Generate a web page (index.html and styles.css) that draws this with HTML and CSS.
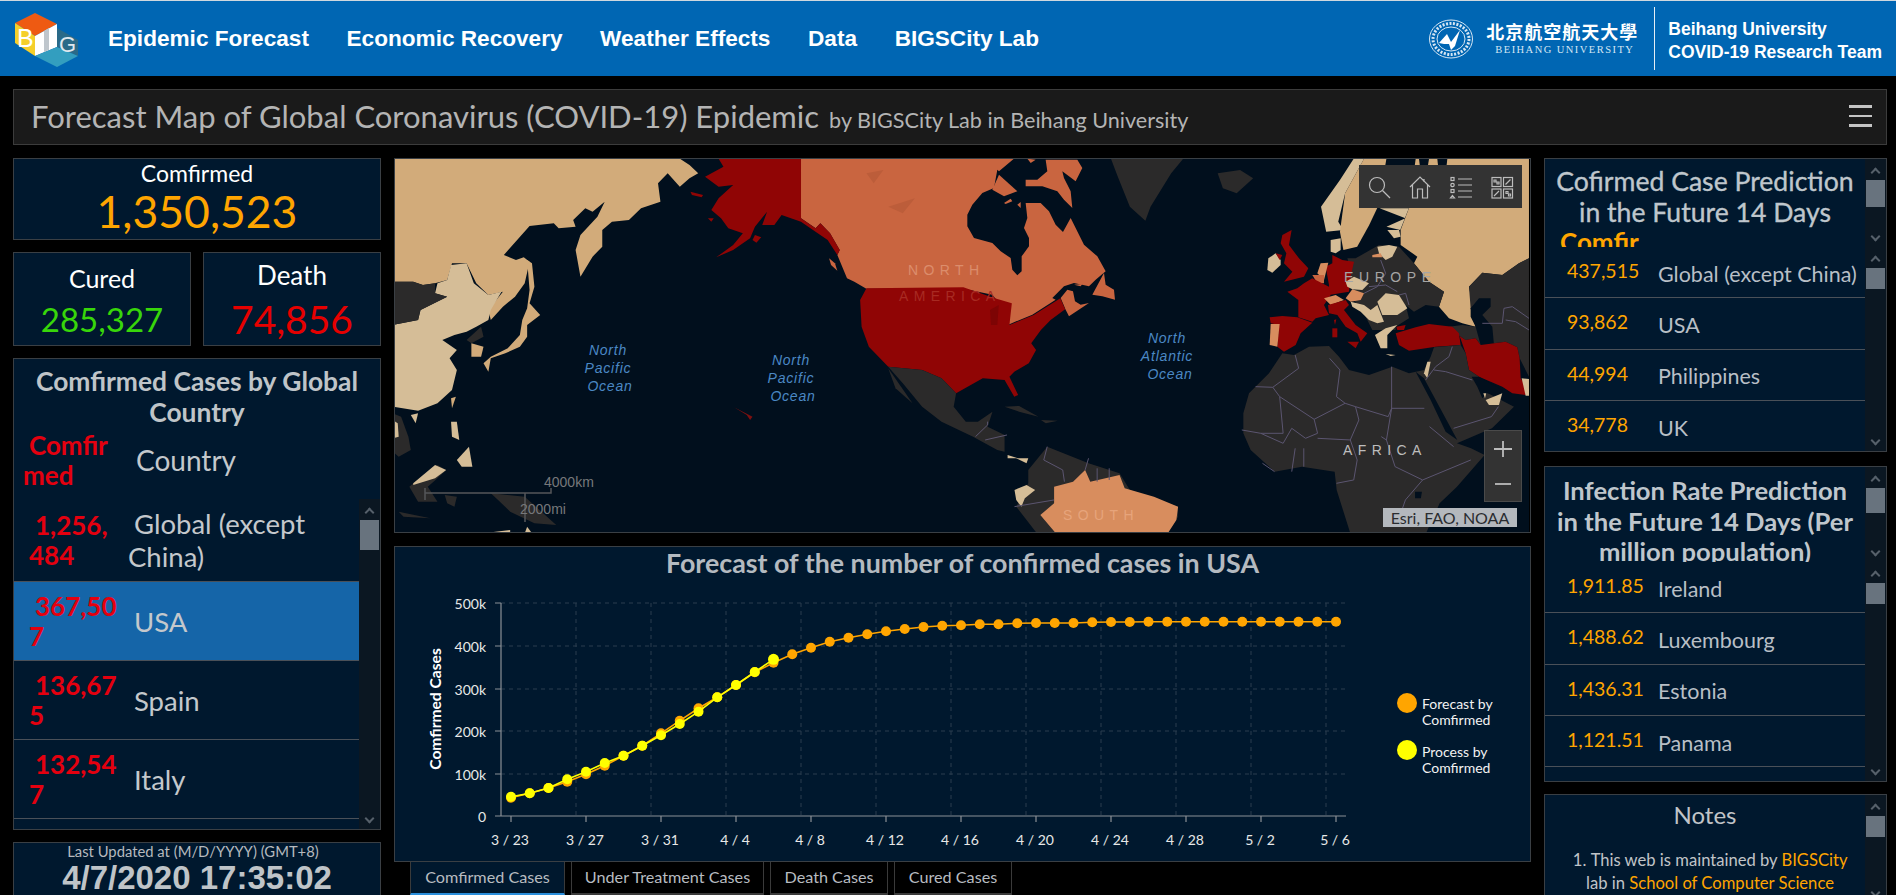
FILE: index.html
```html
<!DOCTYPE html>
<html lang="en">
<head>
<meta charset="utf-8">
<title>Forecast Map of Global Coronavirus (COVID-19) Epidemic</title>
<link rel="stylesheet" href="styles.css">
</head>
<body>
<div class="page">
  <header class="topbar">
    <svg class="logo" width="66" height="56" viewBox="14 12 66 56">
      <polygon fill="#ee5a12" points="35,13 57,24 35,36 15,23"/>
      <polygon fill="#f5cf2a" points="15,23 35,36 35,56 15,43"/>
      <polygon fill="#ffffff" points="35,36 57,24 57,47 35,56"/>
      <polygon fill="#bfc6cc" points="44,31 49,28 49,50 44,52"/>
      <polygon fill="#2a6a88" points="57,28 78,40 78,56 57,47"/>
      <polygon fill="#339ebf" points="35,56 57,47 78,56 57,67"/>
      <text class="logo-b" x="17" y="47">B</text>
      <text class="logo-g" x="59" y="52">G</text>
    </svg>
    <nav class="nav">
      <a class="nav-link">Epidemic Forecast</a>
      <a class="nav-link">Economic Recovery</a>
      <a class="nav-link">Weather Effects</a>
      <a class="nav-link">Data</a>
      <a class="nav-link">BIGSCity Lab</a>
    </nav>
    <div class="brand">
      <svg class="seal" width="44" height="40" viewBox="0 0 44 40">
        <ellipse cx="22" cy="20" rx="21.5" ry="19" fill="none" stroke="#d6e6f3" stroke-width="1"/>
        <ellipse cx="22" cy="20" rx="18" ry="15.5" fill="none" stroke="#d6e6f3" stroke-width="3" stroke-dasharray="2 1.5"/>
        <ellipse cx="22" cy="20" rx="14" ry="12" fill="none" stroke="#d6e6f3" stroke-width="1"/>
        <path d="M10 24 L18 15 L22 23 L31 11 L26 27 L22 31 L20 25 L15 25 Z" fill="#ffffff"/>
      </svg>
      <div class="brand-name">
        <div class="brand-cn">北京航空航天大學</div>
        <div class="brand-en">BEIHANG UNIVERSITY</div>
      </div>
      <div class="brand-team">Beihang University<br>COVID-19 Research Team</div>
    </div>
  </header>

  <section class="titlebar">
    <div><span class="title-main">Forecast Map of Global Coronavirus (COVID-19) Epidemic</span><span class="title-sub">by BIGSCity Lab in Beihang University</span></div>
    <div class="burger"><i></i><i></i><i></i></div>
  </section>

  <main class="columns">
    <div class="col-left">
      <div class="card card-total">
        <div class="stat-label">Comfirmed</div>
        <div class="stat-total">1,350,523</div>
      </div>
      <div class="pair">
        <div class="card card-small">
          <div class="stat-label">Cured</div>
          <div class="stat-num green">285,327</div>
        </div>
        <div class="card card-small">
          <div class="stat-label stat-label-d">Death</div>
          <div class="stat-num red">74,856</div>
        </div>
      </div>
      <div class="card country-card">
        <h2 class="country-title">Comfirmed Cases by Global Country</h2>
        <div class="country-head">
          <div class="cval cval-head">Comfirmed</div>
          <div class="cname cname-head">Country</div>
        </div>
        <div class="country-body">
          <div class="country-list">
            <div class="crow crow-first"><div class="cval">1,256,484</div><div class="cname">Global (except China)</div></div>
            <div class="crow crow-on"><div class="cval">367,507</div><div class="cname">USA</div></div>
            <div class="crow"><div class="cval">136,675</div><div class="cname">Spain</div></div>
            <div class="crow"><div class="cval">132,547</div><div class="cname">Italy</div></div>
          </div>
          <div class="sbar"><i class="up"></i><b class="thumb t30"></b><i class="down"></i></div>
        </div>
      </div>
      <div class="card updated">
        <div class="updated-label">Last Updated at (M/D/YYYY) (GMT+8)</div>
        <div class="updated-date">4/7/2020 17:35:02</div>
      </div>
    </div>

    <div class="col-mid">
      <div class="map">
        <svg class="map-svg" width="1134" height="373" viewBox="396 159 1134 373">
          <rect x="396" y="159" width="1134" height="373" class="sea"/>
          <g transform="translate(950 158) scale(.3333)">
            <polygon class="canada" points="-444,2 195,2 150,40 145,35 135,90 100,105 70,140 55,170 55,205 75,240 130,255 155,280 185,300 190,335 205,352 218,340 218,295 240,265 240,240 225,210 235,180 230,135 275,135 300,160 320,200 342,222 365,180 405,260 445,295 470,340 440,365 420,385 375,375 345,385 310,420 320,425 250,470 178,500 175,465 130,410 45,392 -248,392 -284,371 -306,361 -335,291 -328,276 -357,226 -386,196 -400,211 -444,181"/>
            <polygon class="canada" points="335,420 355,395 372,400 378,430 395,440 420,435 360,475 350,455"/>
            <polygon class="canada" points="430,410 465,345 470,380 495,395 498,425 460,415"/>
            <polygon class="canada" points="375,380 400,378 395,385"/>
            <polygon class="canada" points="290,5 385,5 400,30 380,70 340,40 345,60 365,100 370,150 345,125 325,100 280,85 230,85 230,65 265,65 295,40"/>
            <polygon class="canada" points="235,2 260,5 245,15"/>
            <polygon class="canada" points="150,50 205,100 165,115 130,95"/>
            <polygon class="canada" points="165,135 185,122 190,130 170,138"/>
            <polygon class="canada" points="205,140 215,132 215,150"/>
          </g>
          <g transform="translate(390 150) scale(.4847 .3333)">
            <polygon class="tan" points="8,26 600,26 620,45 638,70 620,85 600,110 575,70 555,100 560,155 520,175 495,210 460,215 440,240 440,290 420,320 395,380 385,300 395,255 430,200 445,155 420,185 405,175 380,210 385,230 350,235 340,220 290,228 237,315 262,330 278,322 290,335 280,400 260,440 235,470 210,510 205,480 235,425 205,435 180,400 160,340 130,340 120,390 95,400 70,405 50,395 8,395"/>
            <polygon class="pale" points="8,525 60,510 65,480 120,440 95,430 100,400 120,390 128,345 160,340 175,400 205,435 232,425 210,480 205,510 180,530 160,545 135,555 110,570 140,600 125,625 140,660 130,720 100,760 60,782 8,770"/>
            <polygon class="dark" points="8,395 50,395 70,405 95,400 95,430 120,440 65,480 60,510 8,525"/>
            <polygon class="tan" points="285,330 295,340 300,410 290,460 312,495 285,525 285,560 270,590 240,610 210,625 205,665 195,640 210,620 245,595 270,555 275,510 285,475 290,420"/>
            <polygon class="dark" points="160,570 190,530 195,560 170,580"/>
            <polygon class="tan" points="170,580 195,590 190,620 170,620"/>
            <polygon class="tan" points="128,745 138,740 130,775"/>
            <polygon class="pale" points="45,795 60,790 55,820"/>
            <polygon class="pale" points="128,815 140,815 145,870 130,860"/>
            <polygon class="pale" points="140,930 165,890 172,950 150,950"/>
            <polygon class="dark" points="8,790 25,800 40,860 45,900 20,920 8,905"/>
            <polygon class="pale" points="8,810 18,820 20,860 8,865"/>
            <polygon class="dark" points="50,1000 100,945 118,960 100,985 80,1010 100,1055 60,1055 42,1010"/>
            <polygon class="pale" points="50,1000 95,945 118,960 95,985 50,1005"/>
            <polygon class="dark" points="115,1035 140,1040 135,1070 120,1060"/>
            <polygon class="dark" points="210,1030 280,1040 345,1125 300,1120 250,1085 225,1050"/>
            <polygon class="dark" points="20,1085 85,1105 30,1100"/>
            <polygon class="pale" points="205,1148 250,1140 250,1150"/>
            <polygon class="pale" points="285,1130 295,1150 280,1150"/>
            <polygon class="red-land" points="680,26 850,26 850,205 880,235 890,220 910,250 930,300 925,315 905,270 880,245 850,215 810,195 795,225 770,225 780,185 755,230 745,265 710,300 675,322 710,285 730,250 700,235 685,205 665,180 680,145 710,105 680,110 652,80 690,50"/>
            <polygon class="red-land" points="622,125 648,135 645,142 625,135"/>
            <polygon class="red-land" points="658,205 670,205 665,215"/>
            <polygon class="red-land" points="755,255 768,262 758,278 750,270"/>
            <polygon class="canada" points="908,325 920,340 925,362 912,345"/>
            <polygon class="canada-shade" points="985,70 1020,60 1000,100"/>
            <polygon class="canada-shade" points="1030,170 1085,145 1060,190"/>
            <polygon class="red-land" points="985,415 1185,412 1250,445 1285,460 1280,525 1330,495 1385,445 1395,478 1365,510 1345,540 1325,580 1335,600 1320,640 1290,665 1280,680 1298,735 1290,740 1270,690 1225,685 1170,730 1140,685 1100,660 1030,650 990,590 975,530 972,450"/>
            <polygon class="red-shade" points="1240,480 1258,465 1255,525 1242,525"/>
            <polygon class="hawaii" points="712,772 730,785 750,800 745,810 738,795"/>
            <polygon class="dark" points="1030,650 1100,660 1140,685 1170,730 1165,770 1190,815 1215,815 1245,785 1235,830 1270,855 1270,905 1255,900 1205,860 1140,815 1100,770 1060,700"/>
            <polygon class="dark" points="1030,655 1080,760 1045,715"/>
            <polygon class="dark" points="1270,770 1300,768 1340,800 1300,785"/>
            <polygon class="dark" points="1345,810 1380,812 1355,820"/>
            <polyline class="border" points="1210,860 1235,825 1235,815"/>
            <polyline class="border" points="1230,870 1275,855"/>
          </g>
          <g transform="translate(1000 150) scale(.3444 .3333)">
            <polygon class="dark" points="325,26 535,26 500,70 440,170 425,212 380,170 345,80"/>
            <polygon class="dark" points="635,70 700,60 738,85 690,130 650,115"/>
            <polygon class="dark" points="85,960 140,890 260,940 350,970 380,1020 520,1070 520,1100 490,1150 110,1150 50,1070 85,1000"/>
            <polygon class="brazil" points="160,1010 215,995 250,960 265,995 350,975 365,1015 450,1040 520,1070 515,1110 490,1150 165,1150 120,1095 160,1060"/>
            <polygon class="pale" points="45,1020 80,1005 105,1020 75,1045 65,1070 50,1050"/>
            <polygon class="pale" points="25,915 55,925 85,925 80,940 50,925 25,925"/>
            <polygon class="pale" points="1030,26 1060,26 1005,130 985,215 1000,240 950,245 935,170 990,90"/>
            <polygon class="tan" points="1060,26 1125,26 1100,170 1075,225 1040,290 1000,300 990,245 1005,130"/>
            <polygon class="pale" points="1105,175 1190,175 1165,240 1125,230 1180,205"/>
          </g>
          <g transform="translate(1250 230) scale(.3333)">
            <polygon class="tan" points="480,-66 500,-213 840,-213 840,85 810,100 760,135 700,128 660,170 665,195 690,205 665,235 680,290 640,280 600,265 570,230 585,185 540,155 495,100 505,80 455,45 455,0"/>
            <polygon class="sea" points="510,-213 540,-213 530,-150 518,-150"/>
            <polygon class="sea" points="565,-213 595,-213 588,-150 572,-150"/>
            <polygon class="pale" points="245,30 275,25 275,60 260,70 245,65"/>
            <polygon class="dark" points="295,85 320,85 390,45 450,50 495,100 540,155 585,185 570,230 530,225 495,245 470,225 480,265 440,290 440,300 370,300 340,240 320,220 300,140 300,100"/>
            <polygon class="pale" points="385,50 420,45 445,50 430,80 410,90 390,70"/>
            <polygon class="brazil" points="370,75 395,70 400,82 370,82"/>
            <polygon class="pale" points="415,0 450,0 455,20 435,25"/>
            <polygon class="red-land" points="250,75 280,90 315,95 305,140 300,185 240,195 240,165 230,110 250,100"/>
            <polygon class="brazil" points="215,100 238,98 225,150 205,130"/>
            <polygon class="canada" points="190,135 225,135 225,160 205,160"/>
            <polygon class="red-land" points="190,145 240,170 245,195 225,225 240,255 200,265 190,275 148,262 148,210 115,185 145,175 165,160"/>
            <polygon class="brazil" points="225,205 260,195 285,210 245,225"/>
            <polygon class="brazil" points="290,205 310,178 345,190 335,210 305,215"/>
            <polygon class="pale" points="290,155 315,140 360,160 340,180 310,178 295,170"/>
            <polygon class="red-land" points="237,225 290,210 300,225 285,240 320,285 355,310 335,335 325,310 290,290 265,255 240,250"/>
            <polygon class="red-land" points="250,295 265,295 265,322 250,322"/>
            <polygon class="red-land" points="255,270 262,268 258,285"/>
            <polygon class="red-land" points="295,335 330,335 320,355"/>
            <polygon class="red-land" points="62,262 100,258 145,262 190,278 155,310 140,345 105,365 85,350 90,285 65,280"/>
            <polygon class="brazil" points="65,282 92,282 85,350 62,345"/>
            <polygon class="pale" points="58,85 80,70 95,90 95,105 70,128 55,120"/>
            <polygon class="red-land" points="80,70 100,75 92,90"/>
            <polygon class="red-land" points="100,15 128,0 120,45 150,85 178,115 165,140 105,155 130,125 105,100 112,70 95,40"/>
            <polygon class="pale" points="305,215 345,225 365,240 385,225 405,275 385,280 360,270 335,245 310,230"/>
            <polygon class="pale" points="385,215 410,190 450,195 475,235 445,255 400,255"/>
            <polygon class="pale" points="378,315 410,295 445,285 415,315 415,355 395,355"/>
            <polygon class="pale" points="410,372 440,375 425,378"/>
            <polygon class="dark" points="660,170 700,128 760,135 810,100 840,85 840,440 812,385 805,352 770,335 695,345 680,325 650,330 632,318 600,290 640,285 680,290 665,235"/>
            <polygon class="sea" points="665,235 690,205 725,205 725,230 700,255 730,290 735,345 695,345 680,290 665,260"/>
            <polygon class="red-land" points="440,310 500,292 540,282 610,290 630,310 635,345 560,350 480,362 450,345"/>
            <polygon class="red-land" points="442,290 470,285 465,300 445,300"/>
            <polygon class="red-land" points="632,318 650,330 680,325 695,345 770,335 805,352 812,385 815,445 835,475 830,495 790,490 760,470 690,440 660,420 650,370"/>
            <polygon class="pale" points="818,445 840,447 840,497 830,497"/>
            <polygon class="dark" points="-17,550 0,490 60,430 100,370 135,375 180,350 240,348 270,380 300,420 360,435 430,410 480,430 525,420 545,380 555,352 635,345 650,370 660,420 690,440 717,490 795,530 729,595 624,640 666,655 707,675 624,770 572,820 531,910 304,910 263,780 257,725 159,710 77,725 5,660 -17,610"/>
            <polygon class="sea" points="500,425 525,445 625,630 590,605 545,510"/>
            <polygon class="sea" points="668,440 690,440 760,480 745,495 715,490 700,505 685,470"/>
            <polygon class="pale" points="710,510 760,490 750,525 720,525"/>
            <polygon class="pale" points="703,490 712,490 708,505"/>
            <polygon class="pale" points="535,395 545,395 535,445 525,430"/>
            <polyline class="border" points="395,90 410,130 385,170 345,190"/>
            <polyline class="border" points="450,195 470,190 480,225"/>
            <polyline class="border" points="360,170 410,165 445,185"/>
            <polyline class="border" points="700,280 760,280 765,235 790,230 840,265"/>
            <polyline class="border" points="770,270 800,275 840,300"/>
            <polyline class="border" points="610,350 600,380 560,410 530,450"/>
            <polyline class="border" points="555,420 590,425 670,450"/>
          </g>
          <g transform="translate(1000 150) scale(.3444 .3333)">
            <polygon class="sea" points="1208,1025 1228,1025 1225,1045 1208,1045"/>
            <polyline class="border" points="745,710 795,712 815,740 915,808 1005,760 1035,770 1130,800 1140,775 1235,775"/>
            <polyline class="border" points="860,615 870,655 795,712"/>
            <polyline class="border" points="960,625 990,660 980,740 1005,760"/>
            <polyline class="border" points="1140,650 1140,775 1125,870 1110,860"/>
            <polyline class="border" points="815,740 825,850 760,850 705,840"/>
            <polyline class="border" points="915,808 925,850 890,865 850,835 825,880 760,850"/>
            <polyline class="border" points="1035,770 1045,810 1020,870 925,865"/>
            <polyline class="border" points="1020,870 1040,930 1030,990 980,1000"/>
            <polyline class="border" points="1125,870 1150,950 1230,990 1370,930"/>
            <polyline class="border" points="1230,990 1180,1050 1170,1080"/>
            <polyline class="border" points="1250,830 1320,890"/>
            <polyline class="border" points="765,940 800,965"/>
            <polyline class="border" points="850,965 860,895"/>
            <polyline class="border" points="885,895 885,950"/>
            <polyline class="border" points="1320,835 1430,800 1450,770"/>
            <polyline class="border" points="140,890 130,930 185,960 190,995"/>
            <polyline class="border" points="260,925 250,960"/>
            <polyline class="border" points="285,955 285,995"/>
            <polyline class="border" points="320,955 320,990"/>
            <polyline class="border" points="45,1070 160,1050"/>
          </g>
          <text class="ocean" text-anchor="middle" x="609" y="355">North</text>
          <text class="ocean" text-anchor="middle" x="609" y="373">Pacific</text>
          <text class="ocean" text-anchor="middle" x="611" y="391">Ocean</text>
          <text class="ocean" text-anchor="middle" x="792" y="365">North</text>
          <text class="ocean" text-anchor="middle" x="792" y="383">Pacific</text>
          <text class="ocean" text-anchor="middle" x="794" y="401">Ocean</text>
          <text class="ocean" text-anchor="middle" x="1168" y="343">North</text>
          <text class="ocean" text-anchor="middle" x="1168" y="361">Atlantic</text>
          <text class="ocean" text-anchor="middle" x="1171" y="379">Ocean</text>
          <text class="region region-na1" x="909" y="275">NORTH</text>
          <text class="region region-na2" x="900" y="301">AMERICA</text>
          <text class="region region-eu" x="1345" y="282">EUROPE</text>
          <text class="region region-af" x="1344" y="455">AFRICA</text>
          <text class="region region-sa" x="1064" y="520">SOUTH</text>
          <g class="scale">
            <path d="M426 488 V500 M426 493 H552 V488 M526 493 V522" fill="none"/>
            <text x="545" y="487">4000km</text>
            <text x="521" y="514">2000mi</text>
          </g>
        </svg>
        <div class="toolbar">
          <svg width="24" height="24" viewBox="0 0 24 24"><circle cx="10" cy="10" r="7.5"/><path d="M15.5 15.5 L23 23"/></svg>
          <svg width="24" height="24" viewBox="0 0 24 24"><path d="M2 12 L12 2 L22 12 M4.5 10 V23 H9.5 V14 H14.5 V23 H19.5 V10 M16 4 V7"/></svg>
          <svg width="24" height="24" viewBox="0 0 24 24"><path d="M9 4 H23 M9 10 H23 M9 16 H23 M9 22 H23"/><rect x="2" y="2.5" width="3" height="3"/><circle cx="3.5" cy="10" r="1.7"/><rect x="2" y="14.5" width="3" height="3"/><path d="M3.5 20.5 L5.5 23 H1.5 Z"/></svg>
          <svg width="24" height="24" viewBox="0 0 24 24"><rect x="2" y="2.5" width="9" height="9"/><rect x="13.5" y="2.5" width="9" height="9"/><rect x="2" y="14" width="9" height="9"/><rect x="13.5" y="14" width="9" height="9"/><path d="M4 5 H6 V7 H4 Z M7 7 H9 V9 H7 Z M15.5 9.5 L20.5 4.5 M4 21 L9 16 M16 16.5 H18 V18.5 H16 Z M18.5 19 H20.5 V21 H18.5 Z"/></svg>
        </div>
        <div class="zoomer">
          <svg width="38" height="36" viewBox="0 0 38 36"><path d="M19 10 V26 M10 18 H28"/></svg>
          <svg width="38" height="34" viewBox="0 0 38 34"><path d="M11 17 H27"/></svg>
        </div>
        <div class="attrib">Esri, FAO, NOAA</div>
      </div>

      <div class="chart">
        <h2 class="chart-title">Forecast of the number of confirmed cases in USA</h2>
        <svg class="chart-svg" width="1135" height="278" viewBox="395 583 1135 278">
          <g class="grid">
            <path d="M501 603 H1346 M501 646 H1346 M501 689 H1346 M501 731 H1346 M501 774 H1346"/>
            <path d="M576 603 V816 M651 603 V816 M726 603 V816 M801 603 V816 M876 603 V816 M951 603 V816 M1026 603 V816 M1101 603 V816 M1176 603 V816 M1251 603 V816 M1326 603 V816"/>
          </g>
          <path class="axis" d="M501 603 V816 H1346 M495 603 H501 M495 646 H501 M495 689 H501 M495 731 H501 M495 774 H501 M495 816 H501 M511 816 V822 M586 816 V822 M661 816 V822 M736 816 V822 M811 816 V822 M886 816 V822 M961 816 V822 M1036 816 V822 M1111 816 V822 M1186 816 V822 M1261 816 V822 M1336 816 V822"/>
          <g class="ylab" text-anchor="end">
            <text x="486" y="609">500k</text>
            <text x="486" y="652">400k</text>
            <text x="486" y="695">300k</text>
            <text x="486" y="737">200k</text>
            <text x="486" y="780">100k</text>
            <text x="486" y="822">0</text>
          </g>
          <text class="yname" text-anchor="middle" transform="translate(441 709) rotate(-90)">Comfirmed Cases</text>
          <g class="ylab" text-anchor="middle">
            <text x="510" y="845">3 / 23</text>
            <text x="585" y="845">3 / 27</text>
            <text x="660" y="845">3 / 31</text>
            <text x="735" y="845">4 / 4</text>
            <text x="810" y="845">4 / 8</text>
            <text x="885" y="845">4 / 12</text>
            <text x="960" y="845">4 / 16</text>
            <text x="1035" y="845">4 / 20</text>
            <text x="1110" y="845">4 / 24</text>
            <text x="1185" y="845">4 / 28</text>
            <text x="1260" y="845">5 / 2</text>
            <text x="1335" y="845">5 / 6</text>
          </g>
          <polyline class="line-o" points="511,797.7 529.75,793.3 548.5,788 567.25,781.7 586,774.3 604.75,765.7 623.5,755.7 642.25,745.7 661,733.3 679.75,720.7 698.5,708.3 717.25,697.3 736,685 754.75,672.3 773.5,662.7 792.25,654.3 811,647.7 829.75,641.7 848.5,637.7 867.25,634.3 886,631.3 904.75,629 923.5,627 942.25,625.7 961,625.3 979.75,624.3 998.5,624.3 1017.25,623.3 1036,623 1054.75,623 1073.5,623 1092.25,622.3 1111,622 1129.75,622 1148.5,621.7 1336,621.7"/>
          <g class="dots-o">
            <circle cx="511" cy="797.7" r="5"/><circle cx="529.75" cy="793.3" r="5"/><circle cx="548.5" cy="788" r="5"/><circle cx="567.25" cy="781.7" r="5"/><circle cx="586" cy="774.3" r="5"/><circle cx="604.75" cy="765.7" r="5"/><circle cx="623.5" cy="755.7" r="5"/><circle cx="642.25" cy="745.7" r="5"/><circle cx="661" cy="733.3" r="5"/><circle cx="679.75" cy="720.7" r="5"/><circle cx="698.5" cy="708.3" r="5"/><circle cx="717.25" cy="697.3" r="5"/><circle cx="736" cy="685" r="5"/><circle cx="754.75" cy="672.3" r="5"/><circle cx="773.5" cy="662.7" r="5"/><circle cx="792.25" cy="654.3" r="5"/><circle cx="811" cy="647.7" r="5"/><circle cx="829.75" cy="641.7" r="5"/><circle cx="848.5" cy="637.7" r="5"/><circle cx="867.25" cy="634.3" r="5"/><circle cx="886" cy="631.3" r="5"/><circle cx="904.75" cy="629" r="5"/><circle cx="923.5" cy="627" r="5"/><circle cx="942.25" cy="625.7" r="5"/><circle cx="961" cy="625.3" r="5"/><circle cx="979.75" cy="624.3" r="5"/><circle cx="998.5" cy="624.3" r="5"/><circle cx="1017.25" cy="623.3" r="5"/><circle cx="1036" cy="623" r="5"/><circle cx="1054.75" cy="623" r="5"/><circle cx="1073.5" cy="623" r="5"/><circle cx="1092.25" cy="622.3" r="5"/><circle cx="1111" cy="622" r="5"/><circle cx="1129.75" cy="622" r="5"/><circle cx="1148.5" cy="621.7" r="5"/><circle cx="1167.25" cy="621.7" r="5"/><circle cx="1186" cy="621.7" r="5"/><circle cx="1204.75" cy="621.7" r="5"/><circle cx="1223.5" cy="621.7" r="5"/><circle cx="1242.25" cy="621.7" r="5"/><circle cx="1261" cy="621.7" r="5"/><circle cx="1279.75" cy="621.7" r="5"/><circle cx="1298.5" cy="621.7" r="5"/><circle cx="1317.25" cy="621.7" r="5"/><circle cx="1336" cy="621.7" r="5"/>
          </g>
          <polyline class="line-y" points="511,796.7 529.75,793.3 548.5,788 567.25,779.3 586,771.7 604.75,763 623.5,755.7 642.25,745.7 661,735.3 679.75,724 698.5,711.7 717.25,697.3 736,685 754.75,672 773.5,659.3"/>
          <g class="dots-y">
            <circle cx="511" cy="796.7" r="5"/><circle cx="529.75" cy="793.3" r="5"/><circle cx="548.5" cy="788" r="5"/><circle cx="567.25" cy="779.3" r="5"/><circle cx="586" cy="771.7" r="5"/><circle cx="604.75" cy="763" r="5"/><circle cx="623.5" cy="755.7" r="5"/><circle cx="642.25" cy="745.7" r="5"/><circle cx="661" cy="735.3" r="5"/><circle cx="679.75" cy="724" r="5"/><circle cx="698.5" cy="711.7" r="5"/><circle cx="717.25" cy="697.3" r="5"/><circle cx="736" cy="685" r="5"/><circle cx="754.75" cy="672" r="5"/><circle cx="773.5" cy="659.3" r="5.5"/>
          </g>
          <circle class="legend-o" cx="1407" cy="703" r="10"/>
          <circle class="legend-y" cx="1407" cy="750" r="10"/>
          <g class="legend-text">
            <text x="1422" y="709">Forecast by</text>
            <text x="1422" y="725">Comfirmed</text>
            <text x="1422" y="757">Process by</text>
            <text x="1422" y="773">Comfirmed</text>
          </g>
        </svg>
      </div>
      <div class="tabs">
        <div class="tab tab-on tab-a">Comfirmed Cases</div>
        <div class="tab tab-b">Under Treatment Cases</div>
        <div class="tab tab-c">Death Cases</div>
        <div class="tab tab-d">Cured Cases</div>
      </div>
    </div>

    <div class="col-right">
      <div class="card side side-a">
        <div class="side-head side-head-a">
          <div class="side-title">
            <h2 class="side-h">Cofirmed Case Prediction in the Future 14 Days</h2>
            <div class="side-cut">Comfirmed</div>
          </div>
          <div class="sbar"><i class="up"></i><b class="thumb t27"></b><i class="down"></i></div>
        </div>
        <div class="side-body">
          <div class="side-list">
            <div class="srow"><span class="sval">437,515</span><span class="sname">Global (except China)</span></div>
            <div class="srow"><span class="sval">93,862</span><span class="sname">USA</span></div>
            <div class="srow"><span class="sval">44,994</span><span class="sname">Philippines</span></div>
            <div class="srow"><span class="sval">34,778</span><span class="sname">UK</span></div>
          </div>
          <div class="sbar"><i class="up"></i><b class="thumb t21"></b><i class="down"></i></div>
        </div>
      </div>
      <div class="card side side-b">
        <div class="side-head side-head-b">
          <div class="side-title">
            <h2 class="side-h side-h-bold">Infection Rate Prediction in the Future 14 Days (Per million population)</h2>
          </div>
          <div class="sbar"><i class="up"></i><b class="thumb t25"></b><i class="down"></i></div>
        </div>
        <div class="side-body">
          <div class="side-list">
            <div class="srow"><span class="sval">1,911.85</span><span class="sname">Ireland</span></div>
            <div class="srow"><span class="sval">1,488.62</span><span class="sname">Luxembourg</span></div>
            <div class="srow"><span class="sval">1,436.31</span><span class="sname">Estonia</span></div>
            <div class="srow"><span class="sval">1,121.51</span><span class="sname">Panama</span></div>
          </div>
          <div class="sbar"><i class="up"></i><b class="thumb t21"></b><i class="down"></i></div>
        </div>
      </div>
      <div class="card side side-c">
        <div class="notes">
          <h2 class="notes-h">Notes</h2>
          <ol class="notes-list">
            <li>This web is maintained by <span class="hl">BIGSCity</span> lab in <span class="hl">School of Computer Science</span></li>
          </ol>
        </div>
        <div class="sbar"><i class="up"></i><b class="thumb t21"></b><i class="down"></i></div>
      </div>
    </div>
  </main>
</div>
</body>
</html>
```
FILE: styles.css
```css
* { box-sizing: border-box; }
html, body { margin: 0; padding: 0; background: #000; overflow: hidden; }
body { font-family: Lato, "Open Sans", sans-serif; color: #c0c4c8; }
.page { width: 1896px; height: 895px; overflow: hidden; }
h2 { margin: 0; font-size: inherit; }

/* header */
.topbar { height: 76px; background: #0066b3; border-top: 1px solid #cfd8df; display: flex; align-items: center; padding-left: 14px; font-family: "Liberation Sans", Arial, sans-serif; color: #fff; }
.logo { flex: none; margin-top: 3px; }
.logo-b { font: 400 25px "Liberation Sans", sans-serif; fill: #fff; }
.logo-g { font: 400 22px "Liberation Sans", sans-serif; fill: #dfe8ee; }
.nav { display: flex; gap: 37.6px; margin-left: 28px; }
.nav-link { font-weight: 700; font-size: 22.6px; color: #fff; }
.brand { margin-left: auto; display: flex; align-items: center; height: 63px; }
.seal { flex: none; margin-right: 13px; }
.brand-name { width: 168px; text-align: left; }
.brand-cn { font: 700 18px/20px "Noto Sans CJK SC", sans-serif; letter-spacing: 1px; white-space: nowrap; }
.brand-en { font: 400 10.5px/12px "Liberation Serif", serif; letter-spacing: 1.45px; margin: 3px 0 0 9px; color: #d6e6f3; white-space: nowrap; }
.brand-team { height: 63px; margin-left: 0; padding: 11px 14px 0 13px; border-left: 1px solid #e6eef5; font-weight: 700; font-size: 17.5px; line-height: 23px; white-space: nowrap; }

/* title bar */
.titlebar { margin: 13px 9px 13px 13px; height: 56px; background: #1a1a1a; border: 1px solid #3c3c3c; display: flex; align-items: center; justify-content: space-between; padding: 0 14px 2px 17px; color: #b4b4b4; }
.title-main { font-size: 31px; }
.title-sub { font-size: 21.6px; margin-left: 10px; }
.burger { display: flex; flex-direction: column; gap: 7px; width: 23px; }
.burger i { display: block; height: 2.5px; background: #c4c4c4; }

/* columns */
.columns { display: grid; grid-template-columns: 368px 1137px 343px; column-gap: 13px; padding-left: 13px; height: 737px; }
.card { background: #00182e; border: 1px solid #3a3f44; }
.col-left { display: flex; flex-direction: column; gap: 12px; }
.card-total { height: 82px; text-align: center; flex: none; }
.stat-label { color: #fff; font-size: 23px; line-height: 28px; }
.stat-total { color: #ffa500; font-size: 44.5px; line-height: 48px; }
.pair { display: grid; grid-template-columns: 178px 178px; gap: 12px; flex: none; }
.card-small { height: 94px; text-align: center; }
.card-small .stat-label { padding-top: 10px; font-size: 25px; line-height: 30px; }
.card-small .stat-label-d { padding-top: 7px; font-size: 26px; }
.stat-num { font-size: 33px; line-height: 46px; margin-top: 3px; }
.green { color: #38d60a; }
.red { color: #e60000; font-size: 39px; margin-top: 6px; }

.country-card { height: 472px; flex: none; display: flex; flex-direction: column; overflow: hidden; }
.country-title { font-size: 26.4px; line-height: 31px; font-weight: 700; text-align: center; padding: 7px 12px 0; color: #bfc4c8; height: 71px; flex: none; }
.country-head { height: 69px; display: flex; align-items: center; flex: none; }
.cval { flex: none; width: 92px; margin-left: 15px; color: #e4000f; font-weight: 700; font-size: 26px; line-height: 30px; word-break: break-all; text-indent: 6px; }
.cval-head { margin-left: 9px; margin-top: -10px; }
.cname { margin-left: 7px; color: #c4c8cc; font-size: 27.5px; line-height: 33px; text-indent: 6px; }
.cname-head { margin-left: 15px; margin-top: -9px; font-size: 28px; }
.country-body { flex: 1; display: flex; min-height: 0; }
.country-list { flex: 1; min-width: 0; }
.crow { display: flex; align-items: center; padding: 9px 0; border-bottom: 1px solid #4a5058; }
.crow-first { padding: 8px 0; }
.crow-on { background: #1565a8; }

.sbar { flex: none; width: 21px; background: #0b1722; display: flex; flex-direction: column; align-items: center; padding: 10px 0 7px; }
.sbar .thumb { display: block; width: 19px; background: #68737e; margin-top: 4px; }
.sbar .up, .sbar .down { display: block; flex: none; width: 7px; height: 7px; border-left: 2px solid #56606a; border-top: 2px solid #56606a; transform: rotate(45deg); }
.sbar .down { margin-top: auto; transform: rotate(225deg); }
.t30 { height: 30px; }
.t27 { height: 27px; }
.t25 { height: 25px; }
.t21 { height: 21px; }

.updated { flex: 1; text-align: center; min-height: 60px; }
.updated-label { font-size: 14.8px; line-height: 17px; color: #b6babe; padding-right: 8px; }
.updated-date { font: 700 33px/36px "Liberation Sans", sans-serif; color: #bfc4c8; }

/* map */
.col-mid { display: flex; flex-direction: column; }
.map { position: relative; height: 375px; border: 1px solid #3a3f44; overflow: hidden; flex: none; }
.map-svg { display: block; }
.sea { fill: #010f1d; }
.tan { fill: #d2ab7a; }
.pale { fill: #d5bd97; }
.dark { fill: #2b2a2a; }
.red-land { fill: #900505; }
.red-shade { fill: #7d0404; }
.hawaii { fill: #7c1010; }
.canada { fill: #c96540; }
.canada-shade { fill: #bc5d3a; }
.brazil { fill: #d88d5e; }
.border { fill: none; stroke: #5b5570; stroke-width: 1; vector-effect: non-scaling-stroke; }
.ocean { font: italic 400 14px "Liberation Sans", sans-serif; fill: #4b88c4; letter-spacing: .8px; }
.region { font: 400 14px "Liberation Sans", sans-serif; letter-spacing: 5.4px; }
.region-na1 { fill: #dc8d6c; }
.region-na2 { fill: #a82a22; }
.region-eu { fill: #a5a5a5; letter-spacing: 5.6px; }
.region-af { fill: #bdbdbd; }
.region-sa { fill: #e7a47b; }
.scale path { stroke: #55575a; stroke-width: 1.5; }
.scale text { font: 400 14px "Liberation Sans", sans-serif; fill: #77787a; }
.toolbar { position: absolute; top: 6px; right: 8px; width: 163px; height: 43px; background: #333; display: flex; align-items: center; justify-content: space-around; }
.toolbar svg, .zoomer svg { fill: none; stroke: #bcbcbc; stroke-width: 1.2; display: block; }
.zoomer { position: absolute; top: 271px; right: 8px; width: 38px; background: #333; border: 1px solid #4a4a4a; }
.zoomer svg { stroke-width: 1.8; margin-left: -1px; }
.attrib { position: absolute; top: 349px; right: 13px; width: 134px; height: 19px; background: #b4b8bd; color: #2a2c30; font-size: 16px; line-height: 19px; text-align: center; white-space: nowrap; }

/* chart */
.chart { margin-top: 13px; height: 316px; background: #00182e; border: 1px solid #3a3f44; flex: none; overflow: hidden; }
.chart-title { height: 36px; font-size: 26.8px; line-height: 33px; font-weight: 700; color: #b4bac0; text-align: center; }
.chart-svg { display: block; }
.grid path { fill: none; stroke: #2b3c4e; stroke-dasharray: 4 4; stroke-width: 1; }
.axis { fill: none; stroke: #8a9096; stroke-width: 1.2; }
.ylab text { font: 400 14px Lato, sans-serif; fill: #e8e8e8; }
.yname { font: 700 15.6px Lato, sans-serif; fill: #fff; }
.line-o { fill: none; stroke: #ffa500; stroke-width: 1.6; }
.line-y { fill: none; stroke: #ffff00; stroke-width: 1.6; }
.dots-o circle, .legend-o { fill: #ffa500; }
.dots-y circle, .legend-y { fill: #ffff00; }
.legend-text text { font: 400 14px Lato, sans-serif; fill: #f2f2f2; }

.tabs { display: flex; height: 33px; flex: none; padding-left: 16px; gap: 6px; }
.tab { height: 33px; background: #000; border: 1px solid #3a3a3a; border-top: 0; border-bottom-width: 2px; text-align: center; font-size: 16.2px; line-height: 30px; color: #b8bcc0; white-space: nowrap; }
.tab-on { border-bottom-color: #2a8fdc; background: #00182e; }
.tab-a { width: 155px; }
.tab-b { width: 193px; }
.tab-c { width: 118px; }
.tab-d { width: 118px; }

/* right column */
.col-right { display: flex; flex-direction: column; }
.side { display: flex; flex-direction: column; overflow: hidden; flex: none; }
.side-a { height: 294px; }
.side-b { height: 316px; margin-top: 14px; }
.side-c { height: 110px; margin-top: 12px; flex-direction: row; }
.side-head { display: flex; flex: none; overflow: hidden; }
.side-head-a { height: 88px; }
.side-head-b { height: 95px; }
.side-title { flex: 1; min-width: 0; overflow: hidden; }
.side-h { font-size: 26.6px; line-height: 30.5px; font-weight: 400; text-align: center; padding: 7px 4px 0; color: #bfc6cc; -webkit-text-stroke: .35px #bfc6cc; }
.side-h-bold { font-size: 25.6px; font-weight: 700; padding: 8px 10px 0; -webkit-text-stroke: 0; }
.side-cut { color: #ffa500; font-weight: 700; font-size: 26px; line-height: 30px; width: 92px; word-break: break-all; margin-left: 15px; }
.side-body { flex: 1; display: flex; min-height: 0; }
.side-list { flex: 1; min-width: 0; }
.srow { height: 51.3px; display: flex; align-items: center; border-bottom: 1px solid #4a5058; padding-left: 22px; }
.sval { width: 91px; flex: none; color: #ffa500; font-size: 19.5px; margin-top: -3px; }
.sname { font-size: 21.5px; color: #b8bfc6; white-space: nowrap; margin-top: 3px; }
.notes { flex: 1; min-width: 0; }
.notes-h { font-size: 24px; line-height: 30px; font-weight: 400; text-align: center; padding-top: 5px; }
.notes-list { margin: 19px 0 0; padding: 0 15px 0 25px; font-size: 16.6px; line-height: 23px; text-align: center; list-style-position: inside; }
.hl { color: #ffa500; }
```
